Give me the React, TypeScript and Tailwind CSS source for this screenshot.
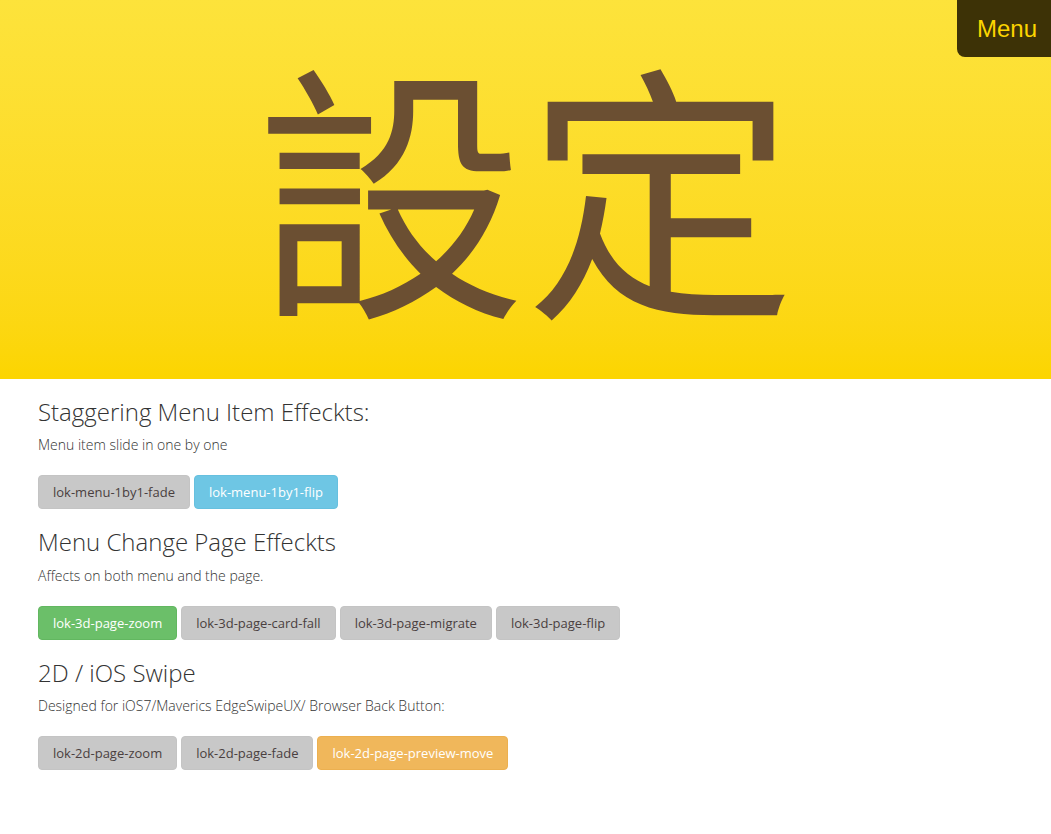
export default function App() {
  const sections = [
    {
      title: 'Staggering Menu Item Effeckts:',
      desc: 'Menu item slide in one by one',
      buttons: [
        { label: 'lok-menu-1by1-fade', tone: 'gray' },
        { label: 'lok-menu-1by1-flip', tone: 'blue' },
      ],
    },
    {
      title: 'Menu Change Page Effeckts',
      desc: 'Affects on both menu and the page.',
      buttons: [
        { label: 'lok-3d-page-zoom', tone: 'green' },
        { label: 'lok-3d-page-card-fall', tone: 'gray' },
        { label: 'lok-3d-page-migrate', tone: 'gray' },
        { label: 'lok-3d-page-flip', tone: 'gray' },
      ],
    },
    {
      title: '2D / iOS Swipe',
      desc: 'Designed for iOS7/Maverics EdgeSwipeUX/ Browser Back Button:',
      buttons: [
        { label: 'lok-2d-page-zoom', tone: 'gray' },
        { label: 'lok-2d-page-fade', tone: 'gray' },
        { label: 'lok-2d-page-preview-move', tone: 'orange' },
      ],
    },
  ];

  const toneClass: Record<string, string> = {
    gray: 'bg-[#c8c8c8] border-[#c4c4c4] text-[#4a3f3f]',
    blue: 'bg-[#6ec6e4] border-[#66c0df] text-white',
    green: 'bg-[#6bbf69] border-[#62b760] text-white',
    orange: 'bg-[#f0b75b] border-[#ecb050] text-white',
  };

  return (
    <div className="min-h-[834px] bg-white font-['Open_Sans',sans-serif] text-[#333]">
      {/* Header */}
      <header className="relative h-[379px] bg-gradient-to-b from-[#fde33b] to-[#fcd500] flex items-center justify-center">
        <h1 className="text-[270px] leading-[1.15] text-[#6b4f32] font-['Noto_Sans_CJK_TC',sans-serif] font-normal pb-[16px]">
          設定
        </h1>
        <button className="absolute top-0 right-0 w-[94px] h-[57px] bg-[#3d3206] rounded-bl-[8px] text-[#fcd500] text-[24px] font-['Liberation_Sans',Arial,sans-serif] flex items-center justify-center pl-[6px]">
          Menu
        </button>
      </header>

      {/* Content */}
      <main className="px-[38px] pb-10">
        {sections.map((s, i) => (
          <section key={i}>
            <h3 className="mt-[20px] mb-[10px] text-[24px] leading-[1.1] font-light">{s.title}</h3>
            <p className="mb-[10px] text-[14px] leading-[20px] font-light">{s.desc}</p>
            <div className="flex gap-[4px] pt-[10px]">
              {s.buttons.map((b, j) => (
                <button
                  key={j}
                  className={`h-[34px] px-[14px] border rounded-[4px] text-[13px] leading-[20px] ${toneClass[b.tone]}`}
                >
                  {b.label}
                </button>
              ))}
            </div>
          </section>
        ))}
      </main>
    </div>
  );
}
